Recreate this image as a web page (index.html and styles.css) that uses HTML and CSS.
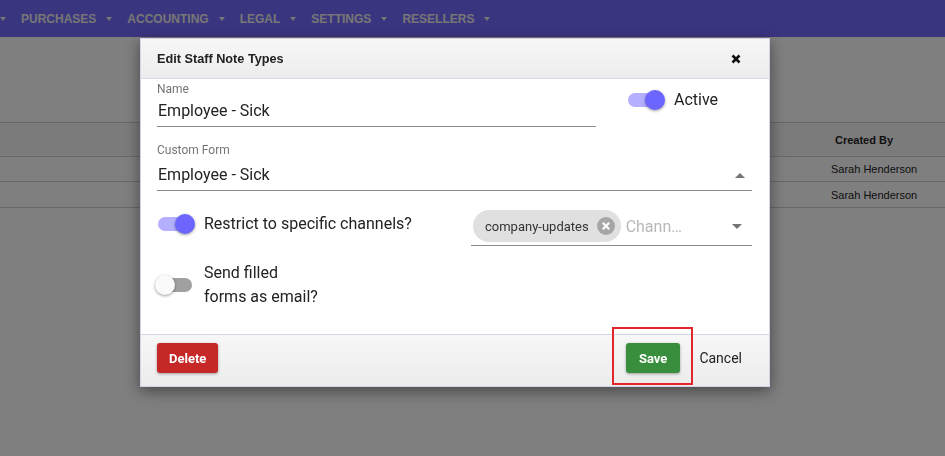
FILE: index.html
```html
<!DOCTYPE html>
<html lang="en">
<head>
  <meta charset="UTF-8" />
  <meta name="viewport" content="width=device-width, initial-scale=1.0" />
  <title>Staff Note Types</title>
  <link rel="stylesheet" href="styles.css">
</head>
<body>
  <nav class="topnav">
    <span class="nav-item"><span class="caret"></span></span>
    <span class="nav-item">PURCHASES <span class="caret"></span></span>
    <span class="nav-item">ACCOUNTING <span class="caret"></span></span>
    <span class="nav-item">LEGAL <span class="caret"></span></span>
    <span class="nav-item">SETTINGS <span class="caret"></span></span>
    <span class="nav-item">RESELLERS <span class="caret"></span></span>
  </nav>

  <main class="page">
    <div class="grid">
      <div class="grid-row grid-head"><span></span><span class="cell">Created By</span></div>
      <div class="grid-row"><span></span><span class="cell">Sarah Henderson</span></div>
      <div class="grid-row"><span></span><span class="cell">Sarah Henderson</span></div>
    </div>
  </main>

  <div class="backdrop"></div>

  <div class="modal">
    <div class="modal-header">
      <h2>Edit Staff Note Types</h2>
      <button class="close" aria-label="Close">
        <svg viewBox="0 0 10 10" width="10" height="10"><path d="M1.5 1.5L8.5 8.5M8.5 1.5L1.5 8.5" stroke="#111" stroke-width="2.6"/></svg>
      </button>
    </div>

    <div class="modal-body">
      <div class="row-name">
        <div class="field name-field">
          <label class="field-label">Name</label>
          <div class="input">Employee - Sick</div>
        </div>
        <label class="switch on active-switch">
          <span class="toggle"><span class="track"></span><span class="thumb"></span></span>
          <span>Active</span>
        </label>
      </div>

      <div class="field select-field">
        <label class="field-label">Custom Form</label>
        <div class="input select">
          <span>Employee - Sick</span>
          <span class="arrow up"></span>
        </div>
      </div>

      <div class="row-channels">
        <label class="switch on">
          <span class="toggle"><span class="track"></span><span class="thumb"></span></span>
          <span>Restrict to specific channels?</span>
        </label>
        <div class="chip-select">
          <span class="chip">company-updates
            <svg class="chip-delete" viewBox="0 0 18 18" width="18" height="18"><circle cx="9" cy="9" r="9" fill="#a6a6a6"/><path d="M5.8 5.8L12.2 12.2M12.2 5.8L5.8 12.2" stroke="#fff" stroke-width="2.2"/></svg>
          </span>
          <span class="placeholder">Chann…</span>
          <span class="arrow down"></span>
        </div>
      </div>

      <label class="switch off email-switch">
        <span class="toggle"><span class="track"></span><span class="thumb"></span></span>
        <span>Send filled<br>forms as email?</span>
      </label>
    </div>

    <div class="modal-footer">
      <button class="btn btn-delete">Delete</button>
      <span class="highlight"><button class="btn btn-save">Save</button></span>
      <button class="btn btn-cancel">Cancel</button>
    </div>
  </div>
</body>
</html>
```

FILE: styles.css
```css
* {
  box-sizing: border-box;
}
body {
  margin: 0;
  height: 456px;
  overflow: hidden;
  font-family: Roboto, "Liberation Sans", sans-serif;
  background: #ffffff;
  color: #222;
}
.topnav {
  height: 37px;
  background: #746aff;
  display: flex;
  align-items: center;
  gap: 15px;
  font-family: "Liberation Sans", Arial, sans-serif;
  font-weight: bold;
  font-size: 12px;
  color: #ececec;
}
.nav-item {
  display: flex;
  align-items: center;
  gap: 10px;
}
.caret {
  width: 0;
  height: 0;
  border-left: 3px solid transparent;
  border-right: 3px solid transparent;
  border-top: 4px solid currentColor;
}
.page {
  padding-top: 85px;
}
.grid {
  border-top: 1px solid #cfcfcf;
  font-family: "Liberation Sans", Arial, sans-serif;
  font-size: 11px;
  color: #222;
}
.grid-row {
  display: grid;
  grid-template-columns: 1fr 125px;
  align-items: center;
  height: 25px;
  border-bottom: 1px solid #cfcfcf;
}
.grid-row .cell {
  padding-left: 11px;
}
.grid-head {
  height: 34px;
  background: #f6f6f6;
  font-weight: bold;
}
.grid-head .cell {
  padding-left: 15px;
}
.grid-row:last-child {
  height: 26px;
}
.backdrop {
  position: fixed;
  inset: 0;
  background: rgba(0, 0, 0, 0.5);
}

/* Modal */
.modal {
  position: absolute;
  left: 140px;
  top: 38px;
  width: 630px;
  background: #fff;
  border: 1px solid #d5d2ea;
  box-shadow: 0 4px 14px rgba(0, 0, 0, 0.45);
}
.modal-header {
  height: 40px;
  display: flex;
  align-items: center;
  justify-content: space-between;
  padding: 0 28px 0 16px;
  background: linear-gradient(#f7f7f7, #ececec);
  border-bottom: 1px solid #d8d5ea;
}
.modal-header h2 {
  margin: 0;
  font-family: "Liberation Sans", Arial, sans-serif;
  font-size: 12.7px;
  font-weight: bold;
  color: #222;
}
.close {
  border: 0;
  background: none;
  padding: 0;
  display: flex;
  cursor: pointer;
}
.modal-body {
  padding: 3px 17px 25px 16px;
}
.row-name {
  display: flex;
  align-items: flex-start;
}
.field-label {
  display: block;
  font-size: 12px;
  line-height: 14px;
  color: #757575;
}
.input {
  font-size: 16px;
  line-height: 24px;
  padding: 3px 0 3px 1px;
  border-bottom: 1px solid #8c8c8c;
  color: #222;
}
.name-field {
  width: 439px;
}
.select-field {
  margin-top: 16px;
}
.select {
  display: flex;
  align-items: center;
  justify-content: space-between;
  padding-top: 6px;
}
.arrow {
  width: 0;
  height: 0;
  margin-right: 7px;
  border-left: 5px solid transparent;
  border-right: 5px solid transparent;
}
.arrow.up {
  border-bottom: 5px solid #757575;
}
.arrow.down {
  border-top: 5px solid #757575;
  margin-left: auto;
}

/* Switches */
.switch {
  display: flex;
  align-items: center;
  gap: 9px;
  font-size: 16px;
  line-height: 24px;
  color: #222;
}
.toggle {
  position: relative;
  flex: none;
  width: 40px;
  height: 20px;
}
.track {
  position: absolute;
  left: 3px;
  top: 3px;
  width: 34px;
  height: 14px;
  border-radius: 7px;
  background: #a0a0a0;
}
.thumb {
  position: absolute;
  top: 0;
  left: 0;
  width: 20px;
  height: 20px;
  border-radius: 50%;
  background: #fafafa;
  box-shadow: 0 1px 3px rgba(0, 0, 0, 0.4);
}
.switch.on .track {
  background: #b4b0ff;
}
.switch.on .thumb {
  left: 20px;
  background: #6c66ff;
}
.active-switch {
  margin: 6px 0 0 29px;
}
.row-channels {
  display: flex;
  align-items: center;
  margin-top: 16px;
}
.row-channels .switch {
  flex: 1;
  margin: 0 0 6px -2px;
}
.chip-select {
  width: 281px;
  display: flex;
  align-items: center;
  padding: 3px 3px 3px 2px;
  border-bottom: 1px solid #8c8c8c;
}
.chip {
  height: 32px;
  display: inline-flex;
  align-items: center;
  gap: 8px;
  padding: 0 6px 0 12px;
  border-radius: 16px;
  background: #e0e0e0;
  font-size: 13px;
  color: #333;
}
.placeholder {
  margin-left: 5px;
  font-size: 16px;
  color: #b8b8b8;
}
.email-switch {
  margin: 15px 0 0 -2px;
}

/* Footer */
.modal-footer {
  display: flex;
  align-items: center;
  padding: 8px 17px 13px 16px;
  border-top: 1px solid #d8d5ea;
  background: linear-gradient(#f7f7f7, #ececec);
}
.btn {
  height: 30px;
  border: 0;
  border-radius: 3px;
  font-family: Roboto, "Liberation Sans", sans-serif;
  font-size: 13px;
  font-weight: bold;
  color: #fff;
  cursor: pointer;
  box-shadow: 0 1px 3px rgba(0, 0, 0, 0.35);
}
.btn-delete {
  padding: 0 12px;
  background: #c62828;
}
.btn-save {
  padding: 0 13px;
  background: #388e3c;
}
.highlight {
  position: relative;
  margin-left: auto;
  display: flex;
}
.highlight::after {
  content: "";
  position: absolute;
  left: -14px;
  right: -13px;
  top: -16px;
  bottom: -12px;
  border: 2px solid #e3262b;
}
.btn-cancel {
  margin-left: 9px;
  padding: 0 10px;
  background: none;
  box-shadow: none;
  color: #222;
  font-size: 14px;
  font-weight: 400;
}
```
